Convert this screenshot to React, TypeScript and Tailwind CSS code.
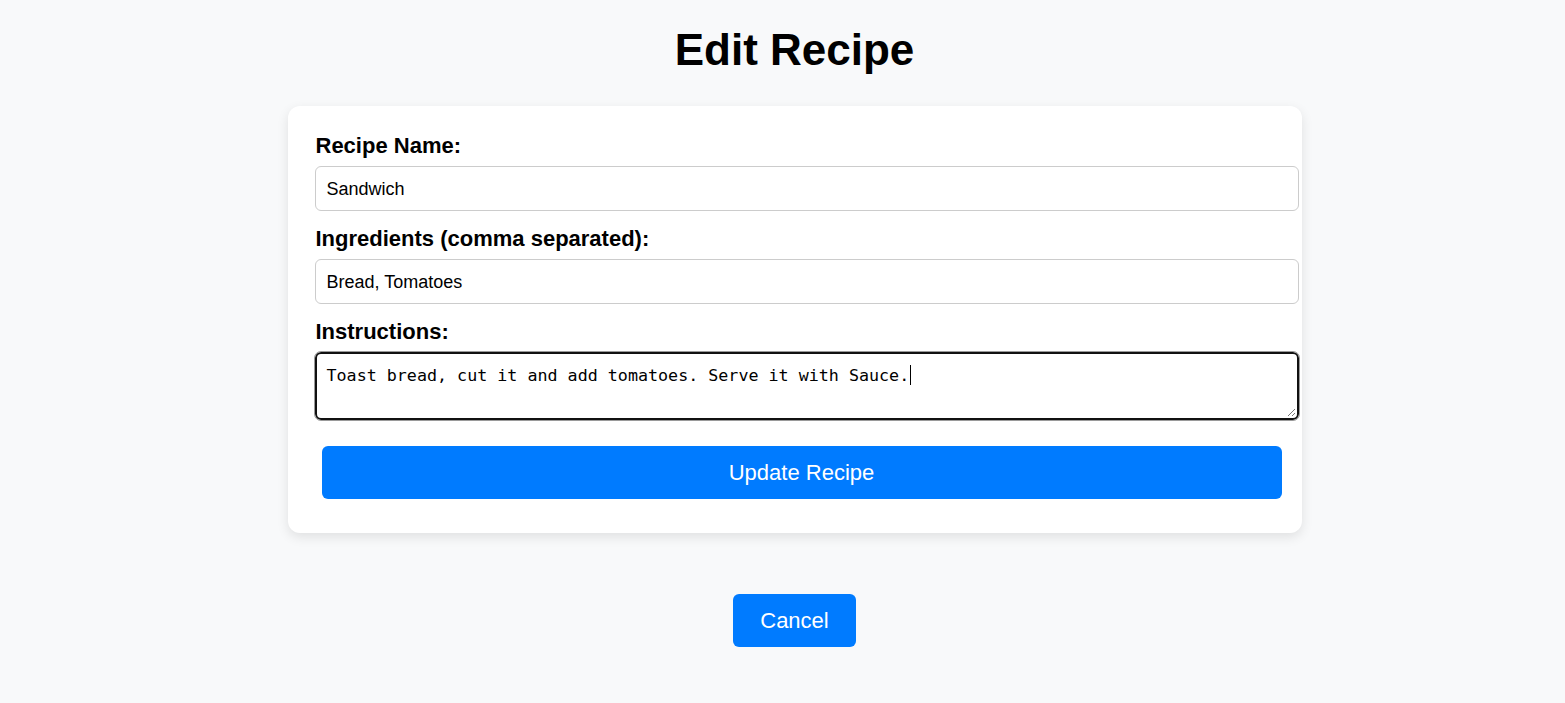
import React from "react";

export default function App() {
  return (
    <div className="min-h-[703px] w-full bg-[#f8f9fa] flex flex-col items-center pl-[24px]" style={{ fontFamily: '"Liberation Sans", Arial, sans-serif' }}>
      <h1 className="mt-[25px] text-[44px] leading-[50px] font-bold text-black">Edit Recipe</h1>
      <div className="mt-[31px] w-[1014px] bg-white rounded-[12px] shadow-[0_4px_12px_rgba(0,0,0,0.1)] p-[28px] flex flex-col">
        <label className="text-[22px] leading-[24px] pb-px font-bold text-black">Recipe Name:</label>
        <div className="mt-[7px] w-[984px] -ml-px h-[45px] border border-[#cccccc] rounded-[6px] flex items-center px-[11px] pt-px text-[18px] text-black">Sandwich</div>
        <label className="mt-[16px] text-[22px] leading-[24px] pb-px font-bold text-black">Ingredients (comma separated):</label>
        <div className="mt-[7px] w-[984px] -ml-px h-[45px] border border-[#cccccc] rounded-[6px] flex items-center px-[11px] pt-px text-[18px] text-black">Bread, Tomatoes</div>
        <label className="mt-[16px] text-[22px] leading-[24px] pb-px font-bold text-black">Instructions:</label>
        <div className="relative mt-[7px] w-[984px] -ml-px h-[68px] border-2 border-[#111111] rounded-[6px] outline outline-1 outline-[#9a9a9a] px-[10px] pt-[11px] text-[16.7px] leading-[20px] text-black" style={{ fontFamily: '"DejaVu Sans Mono", monospace' }}>
          <span>Toast bread, cut it and add tomatoes. Serve it with Sauce.</span>
          <span className="inline-block w-px h-[20px] bg-black align-top ml-px" />
          <svg className="absolute right-[1px] bottom-[1px]" width="9" height="9" viewBox="0 0 9 9">
            <line x1="8" y1="1" x2="1" y2="8" stroke="#777" strokeWidth="1" />
            <line x1="8" y1="5" x2="5" y2="8" stroke="#777" strokeWidth="1" />
          </svg>
        </div>
        <button className="mt-[26px] mb-[6px] ml-[6px] w-[960px] h-[53px] bg-[#007bff] text-white text-[22px] rounded-[6px]">Update Recipe</button>
      </div>
      <button className="mt-[61px] w-[123px] h-[53px] bg-[#007bff] text-white text-[22px] rounded-[6px]">Cancel</button>
    </div>
  );
}
